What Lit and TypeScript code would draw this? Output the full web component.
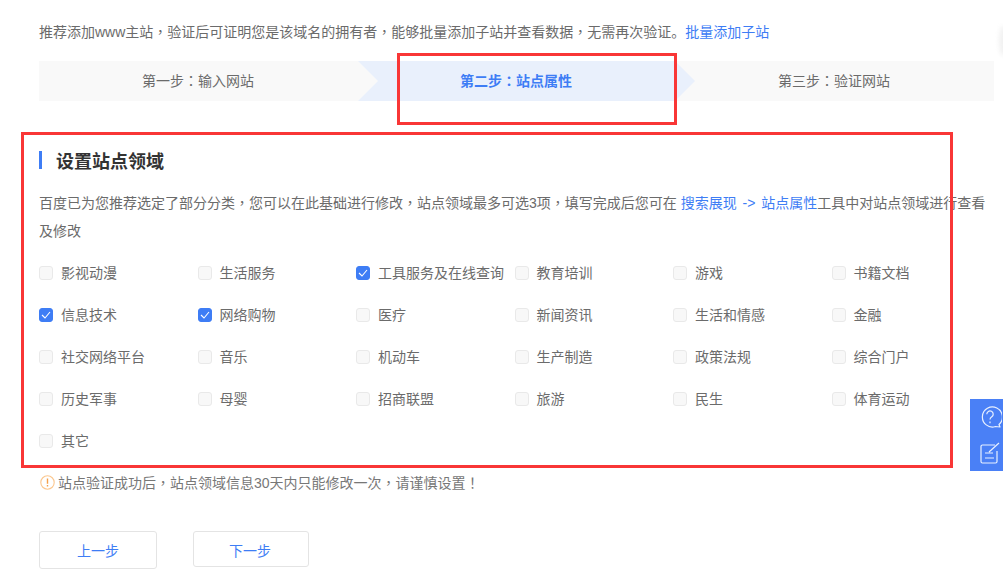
import { LitElement, html, css } from "lit";
import { customElement } from "lit/decorators.js";

const ITEMS: [string, boolean][] = [
  ["影视动漫", false], ["生活服务", false], ["工具服务及在线查询", true], ["教育培训", false], ["游戏", false], ["书籍文档", false],
  ["信息技术", true], ["网络购物", true], ["医疗", false], ["新闻资讯", false], ["生活和情感", false], ["金融", false],
  ["社交网络平台", false], ["音乐", false], ["机动车", false], ["生产制造", false], ["政策法规", false], ["综合门户", false],
  ["历史军事", false], ["母婴", false], ["招商联盟", false], ["旅游", false], ["民生", false], ["体育运动", false],
  ["其它", false],
];

@customElement("app-root")
export class AppRoot extends LitElement {
  static styles = css`
    :host { display: block; position: relative; width: 1003px; height: 583px; overflow: hidden; background: #fff;
      font-family: "Liberation Sans", "Noto Sans CJK SC", sans-serif; font-size: 14px; color: #6b6b6b; text-spacing-trim: space-all; }
    .page { padding: 21px 9px 0 39px; }
    .intro { height: 20px; line-height: 20px; }
    a { color: #3e7df5; text-decoration: none; }
    .link { word-spacing: 2px; }
    .p { font-family: "Noto Sans CJK TC", sans-serif; }
    .steps { display: grid; grid-template-columns: 319px 317px 319px; height: 40px; margin-top: 20px; background: #f9f9f9; }
    .step { position: relative; display: flex; align-items: center; justify-content: center; box-sizing: border-box; padding: 0 1px 3px 0; }
    .step.on { background: #e9f0fc; color: #3e7df5; font-weight: 700; }
    .step.first::after, .step.on::after { content: ""; position: absolute; left: 100%; top: 0; z-index: 1;
      border-style: solid; border-width: 20px 0 20px 20px; border-color: transparent transparent transparent #f9f9f9; }
    .step.on::after { border-left-color: #e9f0fc; }
    .title { display: flex; align-items: center; box-sizing: border-box; margin-top: 50px; height: 18px; border-left: 3px solid #3e7df5;
      padding: 4px 0 0 14px; font-size: 18px; font-weight: 700; color: #333; line-height: 18px; }
    .desc { margin: 19px 0 0; width: 950px; line-height: 28px; }
    .grid { display: grid; grid-template-columns: repeat(6, 158.5px); grid-auto-rows: 42px; margin-top: 7px; }
    .item { display: flex; align-items: center; gap: 8px; white-space: nowrap; }
    .label { padding-bottom: 2px; }
    .box { width: 14px; height: 14px; box-sizing: border-box; flex: none; border: 1px solid #e9e9e9; border-radius: 3px;
      background: #f8f8f8; display: flex; }
    .box.on { background: #3e7df5; border-color: #3e7df5; }
    .box svg { width: 12px; height: 12px; }
    .warn { display: flex; align-items: center; gap: 3px; margin-top: 10px; height: 20px; color: #777; padding-left: 1px; }
    .warn svg { width: 15px; height: 15px; flex: none; }
    .btns { display: flex; gap: 36px; margin-top: 39px; align-items: flex-start; }
    .btn { box-sizing: border-box; height: 38px; width: 118px; border: 1px solid #e4e4e4; border-radius: 3px;
      display: flex; align-items: center; justify-content: center; color: #3e7df5; background: #fff; }
    .btn.next { width: 116px; height: 36px; padding: 2px 2px 0 0; }
    .mark { position: absolute; box-sizing: border-box; border: 3px solid #f93636; pointer-events: none; z-index: 3; }
    .m1 { left: 397px; top: 53px; width: 280px; height: 72px; }
    .m2 { left: 21px; top: 132px; width: 932px; height: 336px; }
    .side { position: absolute; left: 970px; top: 399px; width: 33px; height: 72px; background: #4a80f6;
      display: flex; flex-direction: column; align-items: flex-start; }
    .side svg { width: 24px; height: 24px; margin: 6px 0 6px 8px; flex: none; }
    .edge { position: absolute; left: 999px; top: 26px; width: 8px; height: 30px; border-radius: 50%; background: #f1f1f1; filter: blur(2px); }
  `;

  render() {
    return html`
      <div class="page">
        <div class="intro"><span>推荐添加www主站</span><span class="p">，</span><span>验证后可证明您是该域名的拥有者</span><span class="p">，</span><span>能够批量添加子站并查看数据</span><span class="p">，</span><span>无需再次验证。</span><a>批量添加子站</a></div>
        <div class="steps">
          <div class="step first"><span>第一步</span><span class="p">：</span><span>输入网站</span></div>
          <div class="step on"><span>第二步</span><span class="p">：</span><span>站点属性</span></div>
          <div class="step"><span>第三步</span><span class="p">：</span><span>验证网站</span></div>
        </div>
        <div class="title">设置站点领域</div>
        <p class="desc"><span>百度已为您推荐选定了部分分类</span><span class="p">，</span><span>您可以在此基础进行修改</span><span class="p">，</span><span>站点领域最多可选3项</span><span class="p">，</span><span>填写完成后您可在 </span><a class="link">搜索展现 -&gt; 站点属性</a><span>工具中对站点领域进行查看及修改</span></p>
        <div class="grid">
          ${ITEMS.map(([t, on]) => html`
            <div class="item">
              <span class="box ${on ? "on" : ""}">${on ? html`<svg viewBox="0 0 12 12"><path d="M2 6l3 3 5-6" fill="none" stroke="#fff" stroke-width="1.1"/></svg>` : ""}</span>
              <span class="label">${t}</span>
            </div>`)}
        </div>
        <div class="warn">
          <svg viewBox="0 0 15 15"><circle cx="7.5" cy="7.5" r="6.7" fill="none" stroke="#fbc78f" stroke-width="1.1"/><path d="M7.5 3.5v5.2M7.5 10v1.5" stroke="#f5a04a" stroke-width="1.4"/></svg>
          <div><span>站点验证成功后</span><span class="p">，</span><span>站点领域信息30天内只能修改一次</span><span class="p">，</span><span>请谨慎设置</span><span class="p">！</span></div>
        </div>
        <div class="btns">
          <div class="btn">上一步</div>
          <div class="btn next">下一步</div>
        </div>
      </div>
      <div class="mark m1"></div>
      <div class="mark m2"></div>
      <div class="edge"></div>
      <div class="side">
        <svg viewBox="0 0 24 24" fill="none" stroke="#e8f0ff" stroke-width="1.2">
          <path d="M21 19.5 A10 10 0 1 0 17.5 21.5 L22 22 Z" stroke-linejoin="round"/>
          <path d="M8.8 9.2a3.2 3.2 0 1 1 5 2.6c-1.2.8-1.8 1.4-1.8 2.8M12 16.5v1.8"/>
        </svg>
        <svg viewBox="0 0 24 24" fill="none" stroke="#e8f0ff" stroke-width="1.2">
          <path d="M17 4H4.5A1.5 1.5 0 0 0 3 5.5v15A1.5 1.5 0 0 0 4.5 22h13a1.5 1.5 0 0 0 1.5-1.5V10"/>
          <path d="M7 12h8M7 17h9M11 11l10-9"/>
        </svg>
      </div>
    `;
  }
}
